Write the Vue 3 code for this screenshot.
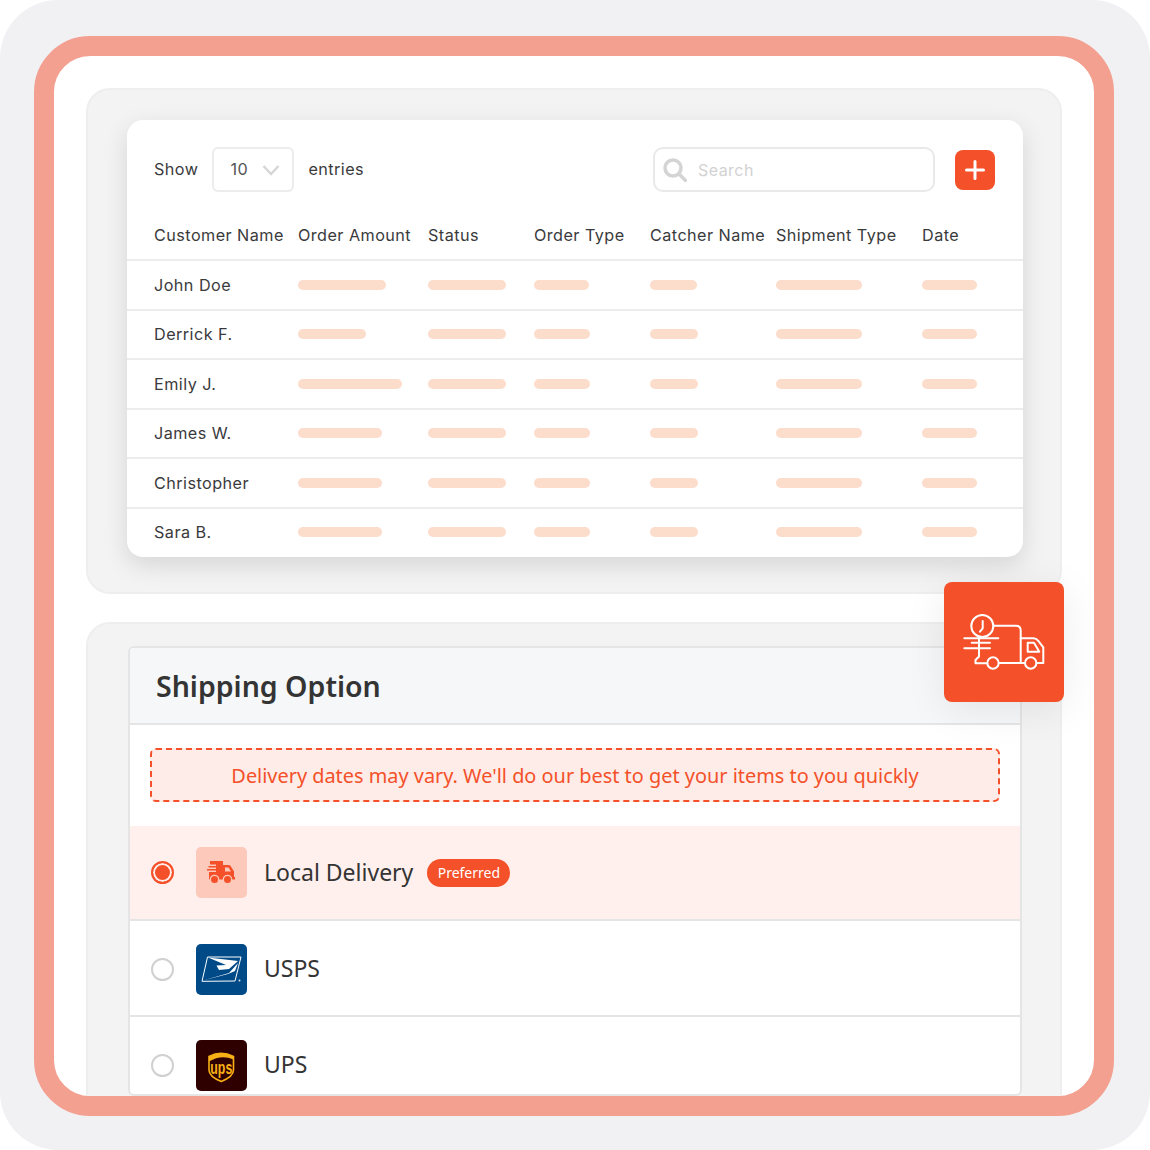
<script setup>
const columns = ['Customer Name', 'Order Amount', 'Status', 'Order Type', 'Catcher Name', 'Shipment Type', 'Date']

// widths of the placeholder bars, one per column after the name
const rows = [
  { name: 'John Doe', bars: [88, 78, 55, 47, 86, 55] },
  { name: 'Derrick F.', bars: [68, 78, 56, 48, 86, 55] },
  { name: 'Emily J.', bars: [104, 78, 56, 48, 86, 55] },
  { name: 'James W.', bars: [84, 78, 56, 48, 86, 55] },
  { name: 'Christopher', bars: [84, 78, 56, 48, 86, 55] },
  { name: 'Sara B.', bars: [84, 78, 56, 48, 86, 55] },
]
</script>

<template>
  <div class="page">
    <div class="frame">
      <div class="inner">
        <section class="panel panel-top">
          <div class="table-card">
            <div class="toolbar">
              <span class="tool-text">Show</span>
              <div class="select">
                <span class="tool-text">10</span>
                <svg width="18" height="12" viewBox="0 0 18 12"><path d="M1.500 2 9 10l7.500-8" fill="none" stroke="#d6d6d6" stroke-width="2.500" /></svg>
              </div>
              <span class="tool-text">entries</span>
              <div class="search">
                <svg width="24" height="24" viewBox="0 0 24 24"><circle cx="10" cy="10" r="8" fill="none" stroke="#d4d4d4" stroke-width="3.500" /><path d="m16 16 6.500 6.500" stroke="#d4d4d4" stroke-width="3.500" stroke-linecap="round" /></svg>
                <span>Search</span>
              </div>
              <div class="add-btn">
                <svg width="20" height="20" viewBox="0 0 20 20"><path d="M10 1.500v17M1.500 10h17" stroke="#fff" stroke-width="3" stroke-linecap="round" /></svg>
              </div>
            </div>

            <div class="grid head">
              <span v-for="col in columns" :key="col">{{ col }}</span>
            </div>
            <div v-for="row in rows" :key="row.name" class="grid row">
              <span>{{ row.name }}</span>
              <span v-for="(w, i) in row.bars" :key="i" class="bar" :style="{ width: w + 'px' }"></span>
            </div>
          </div>
        </section>

        <section class="panel panel-bottom">
          <div class="ship-card">
            <h2 class="ship-title">Shipping Option</h2>
            <div class="notice-wrap">
              <div class="notice">Delivery dates may vary. We'll do our best to get your items to you quickly</div>
            </div>

            <div class="option selected">
              <span class="radio on"></span>
              <div class="logo logo-local">
                <svg width="51" height="51" viewBox="0 0 51 51">
                  <path d="M14 14h13v4h5.500q1.500 0 2.300 1.300L38 24.500V30h1v2.500H13V25h7v-1.500h-9V22h9v-1.500h-7.500V19H20v-1.500h-6z" fill="#f4512a" />
                  <path d="M29 20.500h3.500l2.500 4h-6z" fill="#fcc9bb" />
                  <circle cx="18.500" cy="32.500" r="4.800" fill="#fcc9bb" /><circle cx="18.500" cy="32.500" r="3.500" fill="#f4512a" />
                  <circle cx="31.500" cy="32.500" r="4.800" fill="#fcc9bb" /><circle cx="31.500" cy="32.500" r="3.500" fill="#f4512a" />
                </svg>
              </div>
              <span class="option-name">Local Delivery</span>
              <span class="pill">Preferred</span>
            </div>

            <div class="option">
              <span class="radio"></span>
              <div class="logo logo-usps">
                <svg width="51" height="51" viewBox="0 0 51 51">
                  <path d="M11.500 13H45l-6 24-33 .3z" fill="none" stroke="#fff" stroke-width="1" />
                  <path d="M12 13.500 30 21l-9.500.5 2.500 4.500 10-1 9-8z" fill="#fff" />
                  <path d="M7 36.500 33 29l9-10-3 8-7 3z" fill="#fff" />
                  <circle cx="43.500" cy="36.500" r="1" fill="#cfe0ee" />
                </svg>
              </div>
              <span class="option-name">USPS</span>
            </div>

            <div class="option">
              <span class="radio"></span>
              <div class="logo logo-ups">
                <svg width="51" height="51" viewBox="0 0 51 51">
                  <path d="M13 16.500q12-6.500 24.500 0V30q0 6.500-12.250 11.500Q13 36.500 13 30z" fill="none" stroke="#f7b116" stroke-width="1.600" />
                  <path d="M13 16.500q12-6.500 24.500 0v3q-12-5.500-24.500 2z" fill="#f7b116" />
                  <text x="25.300" y="33.500" text-anchor="middle" class="ups-text" textLength="22" lengthAdjust="spacingAndGlyphs">ups</text>
                </svg>
              </div>
              <span class="option-name">UPS</span>
            </div>
          </div>
        </section>

        <div class="truck-badge">
          <svg width="120" height="120" viewBox="0 0 120 120" fill="none" stroke="#fff" stroke-width="2" stroke-linecap="round" stroke-linejoin="round">
            <circle cx="38.300" cy="44" r="11" />
            <path d="M38.700 39v7.300L36 49.700" />
            <path d="M49.500 43.700H72q4.700 0 4.700 4.700V81H54.700" />
            <path d="M20.300 56.300h34M27.700 60.700H46M20.300 66.300H46" />
            <path d="M35 56v18.500L31.500 78v3.300h11.800" />
            <circle cx="49" cy="81" r="5.700" />
            <circle cx="86.700" cy="81" r="5.700" />
            <path d="M76.700 56.300h12.600q3 0 5 2.500l5 6.500V81h-6.800M76.700 81H81" />
            <path d="M83.700 60.700H90l5.300 9H83.700z" />
          </svg>
        </div>
      </div>
    </div>
  </div>
</template>

<style scoped>
.page {
  position: relative;
  width: 1150px;
  height: 1150px;
  box-sizing: border-box;
  padding: 36px 36px 34px 34px;
  background: #f1f1f4;
  border-radius: 58px;
}

.frame {
  height: 100%;
  box-sizing: border-box;
  border: 20px solid #f3a091;
  border-radius: 56px;
  background: #fff;
}

.inner {
  position: relative;
  height: 100%;
  box-sizing: border-box;
  padding: 32px 32px 0;
  border-radius: 36px;
  overflow: hidden;
}

.panel {
  box-sizing: border-box;
  background: #f3f3f4;
  border: 2px solid #eeeeee;
  border-radius: 24px;
}

.panel-top {
  padding: 30px 37px 35px 39px;
}

.panel-bottom {
  margin-top: 28px;
  padding: 22px 38px 40px 40px;
}

/* Orders table */
.table-card {
  padding-bottom: 1px;
  background: #fff;
  border-radius: 16px;
  box-shadow: 0 8px 24px rgba(0, 0, 0, 0.12);
  font-family: Inter, "Liberation Sans", sans-serif;
  font-size: 16.200px;
  letter-spacing: 0.45px;
  color: #3a3a3c;
}

.toolbar {
  display: flex;
  align-items: center;
  padding: 27px 28px 0 27px;
  height: 45px;
  box-sizing: content-box;
}

.tool-text {
  margin-bottom: 2px;
}

.select {
  display: flex;
  align-items: center;
  justify-content: space-between;
  box-sizing: border-box;
  width: 82px;
  height: 45px;
  margin: 0 14px;
  padding: 0 12px 0 16px;
  border: 2px solid #ececec;
  border-radius: 6px;
  color: #555;
}

.search {
  display: flex;
  align-items: center;
  gap: 11px;
  box-sizing: border-box;
  width: 282px;
  height: 45px;
  margin-left: auto;
  padding: 0 8px;
  border: 2px solid #e9e9e9;
  border-radius: 10px;
  color: #d2d2d2;
  font-size: 16px;
}

.add-btn {
  display: flex;
  align-items: center;
  justify-content: center;
  width: 40px;
  height: 40px;
  margin-left: 20px;
  border-radius: 8px;
  background: #f4512a;
}

.grid {
  display: grid;
  grid-template-columns: 144px 130px 106px 116px 126px 146px 1fr;
  padding-left: 27px;
  align-items: center;
  box-sizing: border-box;
}

.head {
  height: 67px;
  align-items: end;
  padding-bottom: 14px;
  white-space: nowrap;
}

.row {
  height: 49.500px;
  border-top: 2px solid #ececec;
}

.bar {
  display: block;
  height: 10px;
  border-radius: 5px;
  background: #fcdccb;
}

/* Shipping options */
.ship-card {
  height: 450px;
  box-sizing: border-box;
  overflow: hidden;
  background: #fff;
  border: 2px solid #e5e5e5;
  border-radius: 6px;
  font-family: "Noto Sans", "Open Sans", sans-serif;
  color: #343434;
}

.ship-title {
  display: flex;
  align-items: center;
  height: 77px;
  margin: 0;
  padding-left: 26px;
  background: #f6f7f9;
  border-bottom: 2px solid #e5e5e5;
  font-size: 28.500px;
  font-weight: 600;
  box-sizing: border-box;
}

.notice-wrap {
  padding: 23px 20px 24px;
}

.notice {
  display: flex;
  align-items: center;
  justify-content: center;
  height: 54px;
  box-sizing: border-box;
  background: #fdece8;
  border: 2px dashed #f4512a;
  border-radius: 6px;
  color: #f4512a;
  font-size: 19.900px;
}

.option {
  display: flex;
  align-items: center;
  height: 96px;
  box-sizing: border-box;
  padding: 2px 0 0 21px;
  border-bottom: 2px solid #e5e5e5;
}

.option.selected {
  height: 95px;
  padding-top: 0;
  background: #fff0ed;
}

.radio {
  display: block;
  box-sizing: border-box;
  width: 23px;
  height: 23px;
  margin-right: 22px;
  border: 2px solid #d0d0d0;
  border-radius: 50%;
  background: #fff;
}

.radio.on {
  border-color: #f4512a;
  background: #f4512a;
  box-shadow: inset 0 0 0 2px #fff0ed;
}

.logo {
  width: 51px;
  height: 51px;
  margin-right: 17px;
  border-radius: 5px;
}

.logo svg {
  display: block;
}

.logo-local {
  background: #fcc9bb;
}

.logo-usps {
  background: #004b87;
}

.logo-ups {
  background: #2f0000;
}

.ups-text {
  font-family: "Liberation Sans", sans-serif;
  font-size: 18px;
  font-weight: 700;
  fill: #f7b116;
}

.option-name {
  margin-bottom: 2px;
  font-size: 23px;
}

.pill {
  box-sizing: border-box;
  width: 83px;
  height: 28px;
  margin-left: 14px;
  line-height: 27px;
  text-align: center;
  border-radius: 14px;
  background: #f4512a;
  color: #fff;
  font-size: 14px;
}

.truck-badge {
  position: absolute;
  left: 890px;
  top: 526px;
  width: 120px;
  height: 120px;
  border-radius: 8px;
  background: #f4512a;
  box-shadow: 0 8px 40px rgba(0, 0, 0, 0.08);
}

.truck-badge svg {
  display: block;
}
</style>

<style>
html,
body {
  background: #fff;
}
</style>
